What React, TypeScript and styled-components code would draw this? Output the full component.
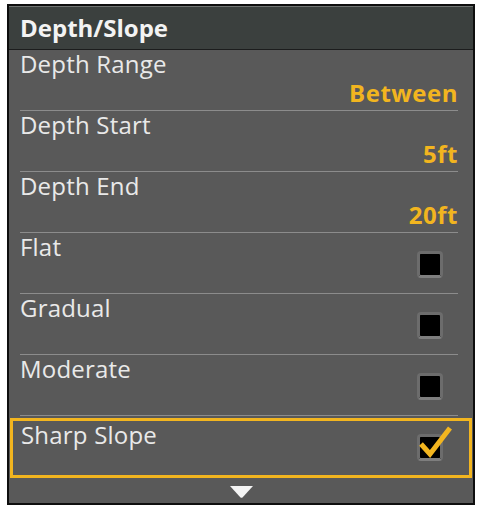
import React from 'react';
import styled, { createGlobalStyle } from 'styled-components';

const GlobalStyle = createGlobalStyle`
  html, body {
    margin: 0;
    padding: 0;
    background: #ffffff;
  }
  body {
    font-family: "Open Sans", "Noto Sans", sans-serif;
  }
`

type Item = {
  label: string,
  value?: string,
  checked?: boolean,
}

const items: Item[] = [
  { label: 'Depth Range', value: 'Between' },
  { label: 'Depth Start', value: '5ft' },
  { label: 'Depth End', value: '20ft' },
  { label: 'Flat', checked: false },
  { label: 'Gradual', checked: false },
  { label: 'Moderate', checked: false },
];

export default function App(): React.FunctionComponentElement<JSX.Element> {
  return (
    <>
      <GlobalStyle />
      <Panel>
        <Header>{'Depth/Slope'}</Header>
        <List>
          {items.map((item) => (
            item.value !== undefined ? (
              <ValueRow key={item.label}>
                <Label>{item.label}</Label>
                <Value>{item.value}</Value>
              </ValueRow>
            ) : (
              <CheckRow key={item.label}>
                <Label>{item.label}</Label>
                <Box />
              </CheckRow>
            )
          ))}
          <SelectedRow>
            <Label>{'Sharp Slope'}</Label>
            <Box>
              <Tick width='40' height='40' viewBox='0 0 40 40'>
                <polyline points='6,20 15,30 35,4' fill='none' stroke='#f2b51f' strokeWidth='5' strokeLinejoin='miter' />
              </Tick>
            </Box>
          </SelectedRow>
        </List>
        <Footer>
          <svg width='25' height='13' viewBox='0 0 25 13'>
            <path d='M1 1 L24 1 L13.5 12.5 Q12.5 13 11.5 12.5 Z' fill='#f4f4f4' />
          </svg>
        </Footer>
      </Panel>
    </>
  )
}

// STYLES
const Panel = styled.div`
  box-sizing: border-box;
  margin: 4px 0 0 7px;
  width: 468px;
  height: 501px;
  border: 2px solid #0e0e0e;
  background: #595959;
  display: flex;
  flex-direction: column;
`

const Header = styled.div`
  height: 43px;
  border-top: 1px solid #6f7371;
  border-bottom: 1px solid #1c1d1d;
  box-sizing: border-box;
  height: 44px;
  background: #3b403e;
  color: #f3f3f3;
  font-weight: 700;
  font-size: 24px;
  line-height: 42px;
  padding-left: 11px;
`

const List = styled.div`
  display: flex;
  flex-direction: column;
`

const ValueRow = styled.div`
  display: flex;
  flex-direction: column;
  height: 60px;
  margin: 0 15px 0 11px;
  border-bottom: 1px solid #8c8c8c;
`

const CheckRow = styled.div`
  display: flex;
  justify-content: space-between;
  align-items: flex-start;
  height: 60px;
  margin: 0 15px 0 11px;
  border-bottom: 1px solid #8c8c8c;

  & > div:last-child {
    margin-top: 18px;
    margin-right: 15px;
  }
`

const SelectedRow = styled.div`
  box-sizing: border-box;
  display: flex;
  justify-content: space-between;
  align-items: flex-start;
  height: 60px;
  margin: 2px 1px 0 1px;
  padding: 0 26px 0 8px;
  border: 3px solid #f2b51f;

  & > div:last-child {
    margin-top: 13px;
  }
`

const Label = styled.div`
  color: #e9e9e9;
  font-size: 24px;
  line-height: 28px;
  letter-spacing: 0.2px;
`

const Value = styled.div`
  margin-top: auto;
  margin-bottom: 3px;
  align-self: flex-end;
  color: #f2b51f;
  font-weight: 700;
  font-size: 24px;
  line-height: 28px;
  letter-spacing: 0.5px;
`

const Box = styled.div`
  position: relative;
  box-sizing: border-box;
  width: 26px;
  height: 27px;
  border: 3px solid #6c6c6c;
  border-bottom-color: #7e7e7e;
  border-radius: 4px;
  background: #000;
`

const Tick = styled.svg`
  position: absolute;
  left: -5px;
  top: -13px;
`

const Footer = styled.div`
  flex: 1;
  display: flex;
  justify-content: center;
  align-items: flex-start;
  padding-top: 7px;
`
